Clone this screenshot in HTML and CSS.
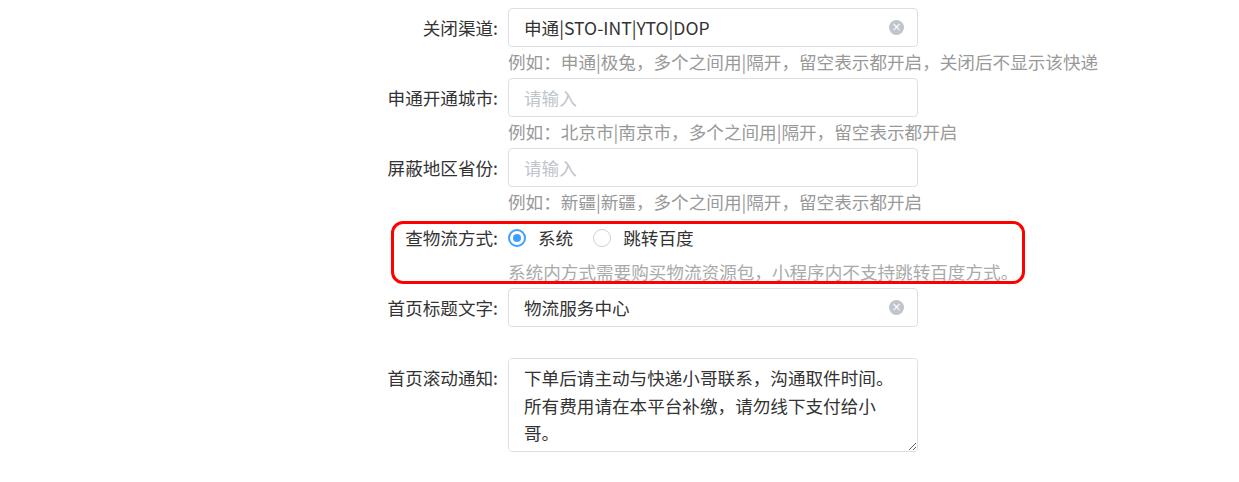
FILE: index.html
```html
<!DOCTYPE html>
<html>

<head>
    <meta charset="UTF-8">
    <title>快递设置</title>
    <link rel="stylesheet" href="styles.css">
</head>

<body>
    <div id="main">
        <div class="form-item">
            <span class="label">关闭渠道:</span>
            <div class="field">
                <div class="input-box">
                    <input type="text" class="text-input" value="申通|STO-INT|YTO|DOP">
                    <span class="clear">×</span>
                </div>
                <div class="help">例如：申通|极兔，多个之间用|隔开，留空表示都开启，关闭后不显示该快递</div>
            </div>
        </div>
        <div class="form-item">
            <span class="label">申通开通城市:</span>
            <div class="field">
                <div class="input-box">
                    <input type="text" class="text-input" placeholder="请输入">
                </div>
                <div class="help">例如：北京市|南京市，多个之间用|隔开，留空表示都开启</div>
            </div>
        </div>
        <div class="form-item">
            <span class="label">屏蔽地区省份:</span>
            <div class="field">
                <div class="input-box">
                    <input type="text" class="text-input" placeholder="请输入">
                </div>
                <div class="help">例如：新疆|新疆，多个之间用|隔开，留空表示都开启</div>
            </div>
        </div>
        <div class="form-item mark-item">
            <span class="label">查物流方式:</span>
            <div class="field">
                <div class="radio-group">
                    <label class="radio checked"><span class="radio-dot"></span>系统</label>
                    <label class="radio"><span class="radio-dot"></span>跳转百度</label>
                </div>
                <div class="help light">系统内方式需要购买物流资源包，小程序内不支持跳转百度方式。</div>
            </div>
            <div class="mark"></div>
        </div>
        <div class="form-item">
            <span class="label">首页标题文字:</span>
            <div class="field">
                <div class="input-box">
                    <input type="text" class="text-input" value="物流服务中心">
                    <span class="clear">×</span>
                </div>
                <div class="help"></div>
            </div>
        </div>
        <div class="form-item">
            <span class="label">首页滚动通知:</span>
            <div class="field">
                <textarea class="text-area">下单后请主动与快递小哥联系，沟通取件时间。所有费用请在本平台补缴，请勿线下支付给小哥。</textarea>
            </div>
        </div>
    </div>
</body>

</html>
```

FILE: styles.css
```css
body {
    margin: 0;
    padding: 0;
    background-color: #fff;
    font-family: "Noto Sans CJK SC", "Noto Sans", sans-serif;
    font-size: 17.6px;
    color: #333;
}

#main {
    padding: 8px 0 0 370px;
}

.form-item {
    display: flex;
    position: relative;
}

.label {
    width: 128px;
    padding-right: 10px;
    text-align: right;
    line-height: 39px;
    height: 39px;
    white-space: nowrap;
}

.field {
    width: 410px;
}

.input-box {
    position: relative;
    height: 39px;
}

.text-input {
    box-sizing: border-box;
    width: 100%;
    height: 39px;
    border: 1px solid #dcdfe6;
    border-radius: 4px;
    padding: 0 36px 0 15px;
    font-family: inherit;
    font-size: 17.6px;
    color: #333;
    outline: none;
}

.text-input::placeholder {
    color: #c0c4cc;
}

.clear {
    position: absolute;
    right: 14px;
    top: 12px;
    width: 15px;
    height: 15px;
    border-radius: 50%;
    background-color: #c0c4cc;
    color: #fff;
    font-size: 12px;
    line-height: 14px;
    text-align: center;
    font-family: "DejaVu Sans", sans-serif;
}

.help {
    height: 31px;
    line-height: 30px;
    color: #999;
    white-space: nowrap;
}

.help.light {
    color: #aaa;
}

.radio-group {
    display: flex;
    align-items: center;
    height: 39px;
}

.radio {
    display: flex;
    align-items: center;
    margin-right: 20px;
    color: #333;
}

.radio-dot {
    box-sizing: border-box;
    width: 18px;
    height: 18px;
    border: 1px solid #d0d0d0;
    border-radius: 50%;
    margin-right: 12px;
    position: relative;
}

.radio.checked .radio-dot {
    border: 2px solid #409eff;
}

.radio.checked .radio-dot::after {
    content: "";
    position: absolute;
    left: 3px;
    top: 3px;
    width: 8px;
    height: 8px;
    border-radius: 50%;
    background-color: #409eff;
}

.mark {
    position: absolute;
    left: 21px;
    top: 3px;
    width: 628px;
    height: 57px;
    border: 3px solid #f00;
    border-radius: 12px;
}

.text-area {
    box-sizing: border-box;
    width: 410px;
    height: 94px;
    border: 1px solid #dcdfe6;
    border-radius: 4px;
    padding: 5px 15px;
    font-family: inherit;
    font-size: 17.6px;
    line-height: 27.5px;
    color: #333;
    outline: none;
    display: block;
}
```
